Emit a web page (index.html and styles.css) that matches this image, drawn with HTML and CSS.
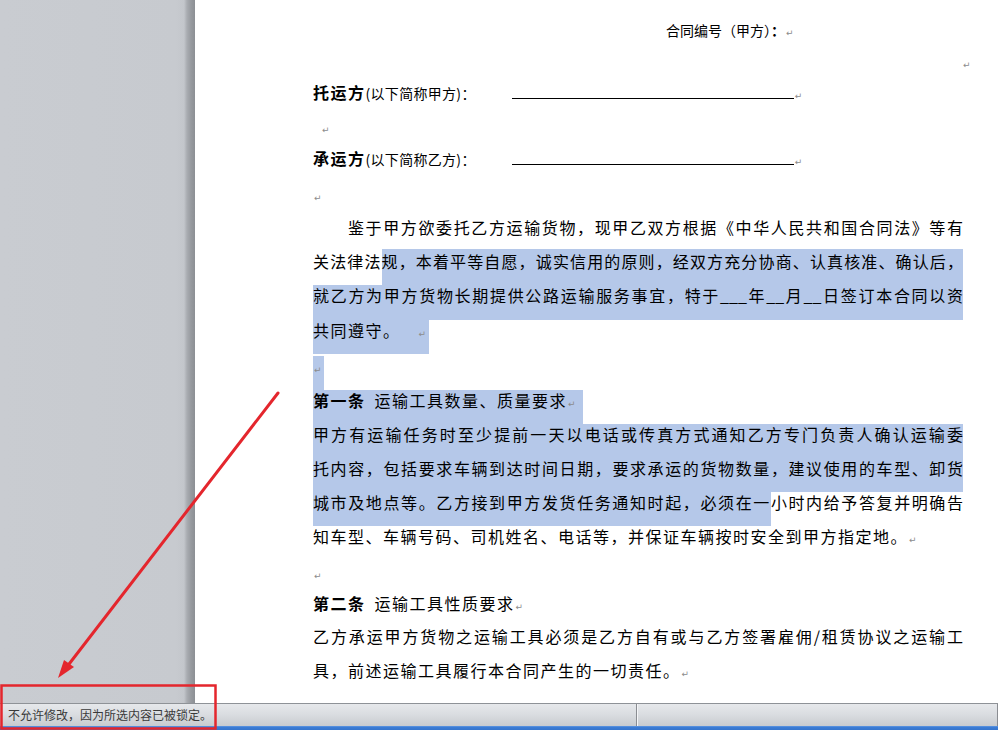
FILE: index.html
```html
<!DOCTYPE html>
<html lang="zh-CN">
<head>
<meta charset="utf-8">
<title>合同</title>
<link rel="stylesheet" href="styles.css">
</head>
<body>
<div class="app">
  <div class="workspace">
    <div class="gutter"></div>
    <div class="page">
      <div class="doc">
        <div class="row h31 contract-no">合同编号（甲方）<b>：</b><span class="pm">↵</span></div>
        <div class="row h31 mark-right"><span class="pm">↵</span></div>
        <div class="row h34"><b>托运方</b><span class="small">(以下简称甲方)：</span><span class="blank"></span><span class="pm">↵</span></div>
        <div class="row h32 mark-indent"><span class="pm">↵</span></div>
        <div class="row h36"><b>承运方</b><span class="small">(以下简称乙方)：</span><span class="blank"></span><span class="pm">↵</span></div>
        <div class="row h33"><span class="pm">↵</span></div>
        <div class="row h34 j indent">鉴于甲方欲委托乙方运输货物，现甲乙双方根据《中华人民共和国合同法》等有</div>
        <div class="row h34 j">关法律法<span class="hl">规，本着平等自愿，诚实信用的原则，经双方充分协商、认真核准、确认后，</span></div>
        <div class="row h35 j sel">就乙方为甲方货物长期提供公路运输服务事宜，特于___年__月__日签订本合同以资</div>
        <div class="row h36"><span class="hlb w116">共同遵守。<span class="pm gap">↵</span></span></div>
        <div class="row h34"><span class="hlb w11"><span class="pm">↵</span></span></div>
        <div class="row h34"><span class="hlb w270"><b>第一条</b><span class="sp"></span>运输工具数量、质量要求<span class="pm">↵</span></span></div>
        <div class="row h34 j sel">甲方有运输任务时至少提前一天以电话或传真方式通知乙方专门负责人确认运输委</div>
        <div class="row h34 j sel">托内容，包括要求车辆到达时间日期，要求承运的货物数量，建议使用的车型、卸货</div>
        <div class="row h34 j"><span class="hl">城市及地点等。乙方接到甲方发货任务通知时起，必须在一</span>小时内给予答复并明确告</div>
        <div class="row h36">知车型、车辆号码、司机姓名、电话等，并保证车辆按时安全到甲方指定地。<span class="pm">↵</span></div>
        <div class="row h31"><span class="pm">↵</span></div>
        <div class="row h33"><b>第二条</b><span class="sp"></span>运输工具性质要求<span class="pm">↵</span></div>
        <div class="row h34 j">乙方承运甲方货物之运输工具必须是乙方自有或与乙方签署雇佣/租赁协议之运输工</div>
        <div class="row h34">具，前述运输工具履行本合同产生的一切责任。<span class="pm">↵</span></div>
      </div>
    </div>
  </div>
  <div class="statusbar">
    <div class="sb-left">不允许修改，因为所选内容已被锁定。</div>
    <div class="sb-right"></div>
  </div>
  <div class="taskbar-edge"></div>
  <svg class="annot" width="998" height="730" viewBox="0 0 998 730" xmlns="http://www.w3.org/2000/svg">
    <line x1="278" y1="393" x2="66" y2="668" stroke="#e4262d" stroke-width="3" stroke-linecap="round"/>
    <polygon points="58,678 74,667 64,660" fill="#e4262d"/>
    <rect x="1.5" y="685.5" width="214" height="43" fill="none" stroke="#e4262d" stroke-width="2.5"/>
  </svg>
</div>
</body>
</html>
```

FILE: styles.css
```css
html, body {
  margin: 0;
  padding: 0;
  width: 998px;
  height: 730px;
  overflow: hidden;
  background: #ffffff;
}

.app {
  position: relative;
  width: 998px;
  height: 730px;
  display: flex;
  flex-direction: column;
  font-family: "Noto Sans CJK SC", "Noto Sans", sans-serif;
}

.workspace {
  height: 703px;
  display: flex;
  overflow: hidden;
}

.gutter {
  width: 195px;
  flex: 0 0 195px;
  background: linear-gradient(to right,
    #c9ccd1 0px, #c7cacf 176px, #c3c6cb 184px,
    #a9acb1 187px, #979a9f 191px, #8c8f94 195px);
}

.page {
  flex: 1;
  background: #ffffff;
  padding: 20px 0 0 118px;
  overflow: hidden;
}

.doc {
  width: 650px;
  color: #000000;
}

.row {
  font-size: 16px;
  line-height: 20px;
  letter-spacing: 1.5px;
  white-space: nowrap;
}

.row.j {
  white-space: normal;
  letter-spacing: 0;
  text-align: justify;
  text-align-last: justify;
  text-justify: inter-character;
}

.row b { font-weight: 700; }

.h31 { height: 31px; }
.h32 { height: 32px; }
.h33 { height: 33px; }
.h34 { height: 34px; }
.h35 { height: 35px; }
.h36 { height: 36px; }

.indent { text-indent: 35px; }

.contract-no {
  font-size: 14px;
  letter-spacing: 0;
  padding-left: 353px;
}

.mark-right { padding-left: 649px; }
.mark-indent { padding-left: 8px; }

.small {
  font-size: 14px;
  letter-spacing: 0.3px;
}

.blank {
  display: inline-block;
  width: 282px;
  height: 10px;
  margin-left: 36px;
  border-bottom: 1px solid #000000;
}

.sp {
  display: inline-block;
  width: 9px;
}

.pm {
  font-family: "DejaVu Sans", sans-serif;
  font-size: 9px;
  letter-spacing: 0;
  color: #8c8c8c;
  margin-left: 1px;
}

.pm.gap { margin-left: 18px; }

.sel { background: #b5c8e9; }

.hl {
  background: #b5c8e9;
  padding-bottom: 12.4px;
}

.hlb {
  display: inline-block;
  vertical-align: top;
  height: 34px;
  background: #b5c8e9;
}

.w116 { width: 116px; }
.w11 { width: 11px; }
.w270 { width: 270px; }

.statusbar {
  height: 22px;
  border-top: 1px solid #8e9297;
  background: linear-gradient(to bottom, #e6e8eb 0%, #d9dce0 50%, #c8cbcf 100%);
  display: flex;
  font-size: 12px;
  color: #3a3a3a;
}

.sb-left {
  width: 637px;
  padding-left: 8px;
  box-sizing: border-box;
  line-height: 21px;
  border-right: 1px solid #8a8d92;
  box-shadow: 1px 0 0 #f4f5f7;
  white-space: nowrap;
}

.sb-right {
  flex: 1;
  border-right: 1px solid #8a8d92;
}

.taskbar-edge {
  height: 4px;
  background: linear-gradient(to bottom, #6b9fe4 0, #3c7dd6 1px, #3574cc 4px);
}

.annot {
  position: absolute;
  left: 0;
  top: 0;
  pointer-events: none;
}
```
